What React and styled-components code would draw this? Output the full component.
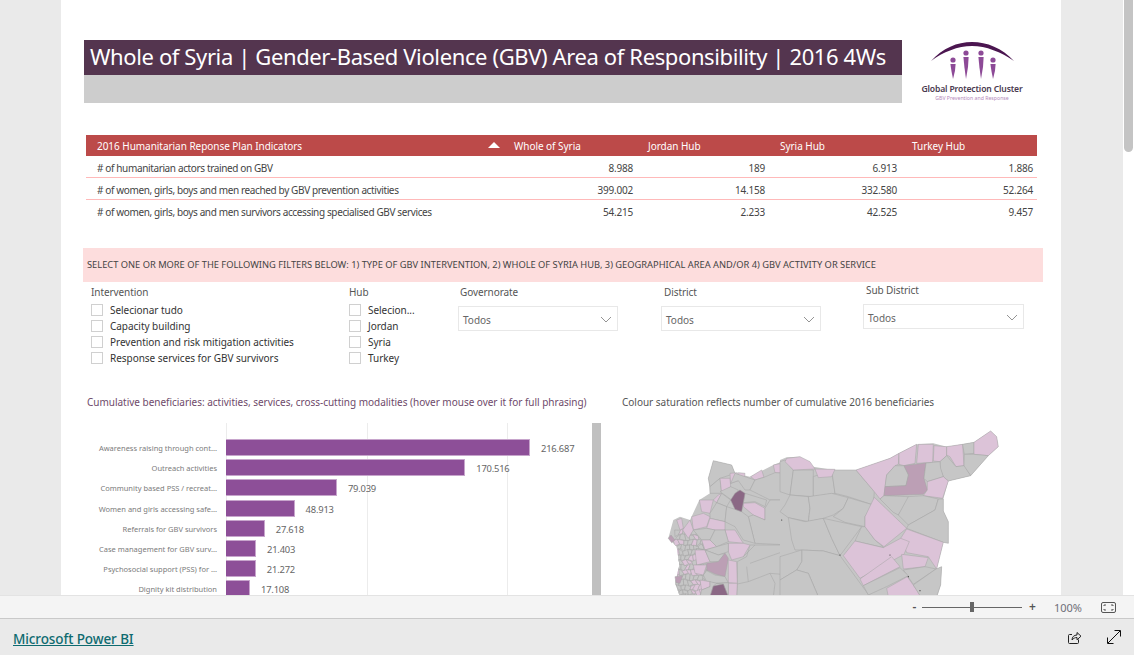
import React from 'react'
import styled, { createGlobalStyle } from 'styled-components'

const FONT = '"Noto Sans", "Open Sans", sans-serif'

const GlobalStyle = createGlobalStyle`
  html, body {
    margin: 0;
    height: 100%;
    overflow: hidden;
    background: #eaeaea;
    font-family: ${FONT};
  }
`

const Shell = styled.div`
  display: flex;
  flex-direction: column;
  height: 655px;
`
const Main = styled.div`
  flex: 1;
  min-height: 0;
  display: flex;
  overflow: hidden;
`
const Gutter = styled.div`
  width: 61px;
  flex: none;
`
const Page = styled.div`
  width: 1000px;
  flex: none;
  background: #fff;
  padding-top: 40px;
  overflow: hidden;
`
const RightGutter = styled.div`
  flex: 1;
`
const ScrollTrack = styled.div`
  width: 11px;
  flex: none;
  background: #fff;
`
const ScrollThumb = styled.div`
  width: 9px;
  height: 152px;
  margin-left: 1px;
  background: #c4c4c4;
  border-radius: 0 0 5px 5px;
`

/* header */
const Header = styled.div`
  display: flex;
  height: 63px;
  margin-left: 23px;
`
const TitleBlock = styled.div`
  width: 818px;
  background: #cdcdcd;
`
const Title = styled.h1`
  margin: 0;
  height: 35px;
  padding-left: 6px;
  background: #54354f;
  color: #fff;
  font-size: 22px;
  font-weight: 400;
  line-height: 32px;
  letter-spacing: -0.38px;
  white-space: nowrap;
`
const Logo = styled.div`
  width: 100px;
  margin-left: 20px;
  display: flex;
  flex-direction: column;
  align-items: center;
`
const LogoName = styled.div`
  font-size: 8.6px;
  font-weight: 600;
  color: #4a3a50;
  line-height: 11px;
  margin-top: 2px;
  white-space: nowrap;
  letter-spacing: -0.15px;
`
const LogoSub = styled.div`
  font-size: 5.2px;
  color: #b58abb;
  line-height: 7px;
  white-space: nowrap;
`

/* table */
const Table = styled.div`
  width: 951px;
  margin: 32px 0 0 25px;
`
const TableRow = styled.div`
  display: grid;
  grid-template-columns: 423px repeat(4, 132px);
  height: ${p => (p.$head ? '21px' : '22px')};
  padding-top: ${p => (p.$head ? '0' : '1px')};
  align-items: center;
  background: ${p => (p.$head ? '#bc4a49' : '#fff')};
  color: ${p => (p.$head ? '#fff' : '#444')};
  box-shadow: ${p => (p.$line ? 'inset 0 -1px 0 #ffb9b9' : 'none')};
  box-sizing: border-box;
  font-size: 10px;
  letter-spacing: ${p => (p.$head ? '-0.04px' : '-0.37px')};
`
const RowLabel = styled.div`
  padding-left: 11px;
  position: relative;
  white-space: nowrap;
`
const SortArrow = styled.span`
  position: absolute;
  right: 9px;
  top: 3px;
  width: 0;
  height: 0;
  border-left: 6px solid transparent;
  border-right: 6px solid transparent;
  border-bottom: 6px solid #fff;
`
const HeadCell = styled.div`
  padding-left: 7px;
  white-space: nowrap;
  &:nth-child(2) {
    padding-left: 5px;
  }
`
const ValueCell = styled.div`
  text-align: right;
  padding-right: 8px;
  letter-spacing: -0.2px;
  &:last-child {
    padding-right: 4px;
  }
`

/* filters */
const Banner = styled.div`
  width: 960px;
  height: 34px;
  margin: 26px 0 0 22px;
  padding-left: 4px;
  box-sizing: border-box;
  background: #fddddd;
  color: #444;
  font-size: 9.3px;
  line-height: 34px;
  white-space: nowrap;
`
const Filters = styled.div`
  display: flex;
  height: 108px;
  margin: 3px 0 0 30px;
`
const SlicerColumn = styled.div`
  width: ${p => p.$width}px;
  flex: none;
`
const DropColumn = styled.div`
  width: ${p => p.$width || 160}px;
  flex: none;
  margin-right: ${p => p.$gap || 0}px;
  margin-top: ${p => (p.$raised ? '-2px' : '0')};
`
const SlicerLabel = styled.div`
  font-size: 10px;
  line-height: 14px;
  color: #555;
  white-space: nowrap;
  letter-spacing: -0.08px;
  padding-left: ${p => p.$indent || 0}px;
`
const CheckList = styled.div`
  margin-top: 3px;
`
const CheckRow = styled.div`
  display: flex;
  align-items: center;
  height: 16px;
  font-size: 10px;
  color: #333;
  white-space: nowrap;
  letter-spacing: -0.03px;
`
const CheckBox = styled.span`
  width: 10px;
  height: 10px;
  margin-right: 7px;
  border: 1px solid #d0d0d0;
  flex: none;
`
const Dropdown = styled.div`
  display: flex;
  align-items: center;
  justify-content: space-between;
  height: 25px;
  margin-top: 7px;
  padding: 2px 5px 0 4px;
  box-sizing: border-box;
  border: 1px solid #e8e8e8;
  font-size: 10px;
  color: #666;
`

/* charts */
const ChartTitles = styled.div`
  display: flex;
  margin-left: 26px;
  height: 18px;
  margin-bottom: 12px;
`
const ChartTitle = styled.div`
  font-size: 10px;
  line-height: 18px;
  color: ${p => (p.$muted ? '#555' : '#6e4a6a')};
  width: ${p => p.$width || 'auto'};
  white-space: nowrap;
  letter-spacing: -0.02px;
`
const ChartRow = styled.div`
  display: flex;
  margin-left: 26px;
`
const BarChart = styled.div`
  width: 505px;
  flex: none;
  display: grid;
  grid-template-columns: 130px 1fr;
  column-gap: 9px;
  padding-top: 16px;
  height: 300px;
  box-sizing: border-box;
  background:
    linear-gradient(#ececec, #ececec) 139px 0 / 1px 100% no-repeat,
    linear-gradient(#ececec, #ececec) 280px 0 / 1px 100% no-repeat,
    linear-gradient(#ececec, #ececec) 420px 0 / 1px 100% no-repeat;
  align-content: start;
`
const BarLabel = styled.div`
  height: 20.2px;
  font-size: 7.5px;
  line-height: 18px;
  text-align: right;
  color: #7b7b7b;
  white-space: nowrap;
`
const BarCell = styled.div`
  height: 20.2px;
  display: flex;
  align-items: flex-start;
`
const Bar = styled.div`
  height: 17px;
  box-sizing: border-box;
  background: #8d4f98;
  border: 1px solid #c7a5cc;
  border-left: none;
  flex: none;
`
const BarValue = styled.span`
  margin-left: 11px;
  font-size: 9.4px;
  line-height: 19px;
  color: #666;
  letter-spacing: -0.2px;
`
const ChartScroll = styled.div`
  width: 9px;
  height: 172px;
  flex: none;
  background: #c0c0c0;
`
const MapWrap = styled.div`
  margin-left: 39px;
  flex: none;
`

/* bottom bars */
const ZoomBar = styled.div`
  height: 24px;
  flex: none;
  box-sizing: border-box;
  background: #f4f4f4;
  border-top: 1px solid #e3e3e3;
  border-bottom: 1px solid #c9c9c9;
  display: flex;
  align-items: center;
  justify-content: flex-end;
  padding-right: 18px;
  color: #555;
`
const ZoomSign = styled.span`
  font-size: 12px;
  line-height: 12px;
  font-weight: 600;
  color: #555;
  width: 9px;
  text-align: center;
`
const Slider = styled.div`
  width: 100px;
  height: 1px;
  margin: 0 6px 0 3px;
  background: #666;
  display: flex;
  align-items: center;
  justify-content: center;
`
const SliderThumb = styled.span`
  width: 4px;
  height: 10px;
  flex: none;
  background: #666;
`
const ZoomValue = styled.span`
  margin: 0 19px 0 17px;
  font-size: 11px;
  color: #6f6f78;
`
const Footer = styled.div`
  height: 36px;
  flex: none;
  display: flex;
  align-items: center;
  padding: 0 13px;
  background: #eaeaea;
`
const BrandLink = styled.a`
  flex: 1;
  padding-top: 3px;
  font-size: 13.5px;
  font-weight: 500;
  color: #0e6b70;
  text-decoration: underline;
  letter-spacing: -0.1px;
`
const FooterIcons = styled.div`
  display: flex;
  gap: 25px;
`

const indicators = [
  ['# of humanitarian actors trained on GBV', '8.988', '189', '6.913', '1.886'],
  ['# of women, girls, boys and men reached by GBV prevention activities', '399.002', '14.158', '332.580', '52.264'],
  ['# of women, girls, boys and men survivors accessing specialised GBV services', '54.215', '2.233', '42.525', '9.457'],
]

const bars = [
  ['Awareness raising through cont...', 216687],
  ['Outreach activities', 170516],
  ['Community based PSS / recreat...', 79039],
  ['Women and girls accessing safe...', 48913],
  ['Referrals for GBV survivors', 27618],
  ['Case management for GBV surv...', 21403],
  ['Psychosocial support (PSS) for ...', 21272],
  ['Dignity kit distribution', 17108],
]

const fmt = n => String(n).replace(/(\d)(\d{3})$/, '$1.$2')

const Chevron = () => (
  <svg width="12" height="7" viewBox="0 0 12 7" fill="none" stroke="#888" strokeWidth="0.9">
    <path d="M1 1l5 5 5-5" />
  </svg>
)

const LogoMark = () => (
  <svg width="90" height="42" viewBox="0 0 90 42">
    <path d="M4 21C16 8 30 2 45 2c15 0 30 6 42 19-13-9-28-15-42-15C31 6 16 12 4 21z" fill="#4b1650" />
    {[[26, 20], [39, 13], [54, 13], [66, 20]].map(([x, y]) => (
      <g key={x} fill="#8d4a97">
        <circle cx={x} cy={y} r="2.6" />
        <path d={`M${x - 2.6} ${y + 4}h5.200l-.6 ${(39 - y - 4) * 0.45}-2 ${(39 - y - 4) * 0.55}-1.600-${(39 - y - 4) * 0.55}z`} />
      </g>
    ))}
  </svg>
)

const GREY = '#c6c6c6'
const PINK = '#dcc3d8'
const MID = '#bc9fb5'
const DARK = '#8b6885'

// coordinates are read from the 3x crops, hence the two scaled groups below
const eastOutline = '0,105 20,97 60,95 100,125 175,137 228,135 330,100 357,85 410,58 460,55 500,65 582,52 632,18 650,35 655,65 625,92 572,152 505,168 490,222 490,258 505,290 505,355 490,352 470,432 485,425 482,480 470,520 0,520'
const westOutline = '160,32 215,45 225,70 270,80 300,65 340,45 390,25 390,440 60,440 45,400 58,345 50,290 25,265 40,210 60,200 90,210 118,150 150,130 145,85'

const eastRegions = [
  [GREY, '0,110 15,105 40,135 30,210 0,200'],
  [GREY, '40,135 100,135 100,215 30,210'],
  [GREY, '100,155 155,135 165,205 100,215'],
  [GREY, '155,135 228,135 283,200 280,240 205,215 165,205'],
  [GREY, '15,240 30,210 85,215 90,250 85,290 25,278 0,260'],
  [GREY, '85,215 155,205 205,218 190,250 160,270 130,280 85,290 90,250'],
  [GREY, '205,218 280,240 255,275 255,305 195,292 160,275 190,250'],
  [GREY, '25,278 75,290 130,280 155,340 180,392 130,378 65,375 45,375 35,345'],
  [GREY, '130,280 245,305 180,392 155,340'],
  [GREY, '255,305 285,345 312,368 225,348 245,305'],
  [GREY, '65,375 130,378 180,392 270,515 115,515 85,445 50,435 65,410'],
  [GREY, '0,395 65,375 65,410 50,435 0,465'],
  [GREY, '50,435 85,445 115,515 0,515 0,465'],
  [PINK, '228,135 330,100 357,85 355,118 345,122 320,150 312,212 300,222 283,200'],
  [PINK, '357,85 410,58 405,115 372,122 357,118'],
  [PINK, '415,58 460,58 458,112 410,115'],
  [PINK, '462,62 500,65 500,92 480,110 460,108'],
  [PINK, '500,65 548,58 552,122 528,125 510,95 500,90'],
  [GREY, '548,58 582,52 582,85 553,88'],
  [PINK, '582,52 632,18 650,35 655,65 625,92 582,88'],
  [GREY, '553,88 582,88 625,92 572,152 552,125'],
  [GREY, '500,92 528,125 552,122 572,152 505,168 490,155 480,130 480,110'],
  [GREY, '345,122 372,122 385,150 378,182 315,185 320,150'],
  [MID, '372,122 438,114 432,160 442,195 430,208 312,212 315,185 378,182 386,150'],
  [GREY, '438,114 480,110 482,130 490,155 442,170 432,160'],
  [PINK, '442,170 490,155 505,168 488,220 430,212 442,195'],
  [GREY, '300,222 312,212 385,215 385,225 355,270 340,262'],
  [GREY, '385,215 430,212 475,222 465,255 385,300 355,270'],
  [GREY, '475,222 490,222 490,258 505,290 505,355 490,352 380,310 385,300 465,255'],
  [PINK, '283,217 380,310 312,365 285,345 255,305 255,275'],
  [PINK, '380,312 490,352 470,432 445,395 380,383 362,340'],
  [PINK, '225,348 310,368 362,340 388,350 372,388 240,460 190,392'],
  [PINK, '240,462 335,395 360,425 250,482'],
  [PINK, '365,388 445,398 435,425 370,432'],
  [GREY, '370,435 435,425 468,432 400,478'],
  [GREY, '250,482 360,428 385,452 320,485 265,510'],
  [PINK, '320,490 382,455 410,495 422,515 325,515'],
  [GREY, '468,432 485,425 482,480 470,515 422,515 400,480'],
  [PINK, '20,100 60,95 90,110 105,132 40,135 15,110'],
  [PINK, '105,132 165,133 155,155 115,158'],
]

const westRegions = [
  [GREY, '160,32 215,45 225,70 180,85 150,110 145,85'],
  [GREY, '150,110 180,85 185,130 150,130'],
  [PINK, '180,85 210,85 212,110 185,130'],
  [PINK, '210,70 232,68 235,92 212,100'],
  [PINK, '235,68 255,70 252,95 235,92'],
  [PINK, '272,80 305,60 312,82 285,90'],
  [PINK, '340,45 365,40 368,70 345,68'],
  [GREY, '225,70 270,85 285,90 270,120 255,120 235,92 212,100'],
  [GREY, '285,90 312,82 345,68 390,70 390,150 330,150 290,130 270,120'],
  [GREY, '212,110 235,120 215,150 180,125'],
  [PINK, '175,135 185,130 170,158 160,150'],
  [PINK, '118,150 160,150 150,190 125,185'],
  [GREY, '185,130 212,150 200,170 170,158'],
  [GREY, '150,190 170,158 200,170 195,215 150,205'],
  [GREY, '255,130 320,150 315,170 285,155 250,158'],
  [PINK, '250,160 285,158 315,175 315,210 280,195 250,170'],
  [GREY, '390,150 330,150 315,175 315,210 280,195 265,200 285,280 390,285'],
  [GREY, '200,170 225,178 245,185 265,200 285,280 250,270 225,230 195,215'],
  [PINK, '95,200 130,190 150,200 140,230 100,240'],
  [PINK, '150,205 195,215 195,240 165,240 140,235'],
  [PINK, '195,240 225,240 250,280 205,275'],
  [GREY, '100,240 140,235 165,240 150,270 125,270'],
  [PINK, '125,270 150,270 170,290 135,300'],
  [GREY, '165,240 195,240 205,275 170,290 150,270'],
  [GREY, '232,335 260,320 270,285 390,285 390,440 230,440 232,400'],
  [PINK, '205,280 250,280 270,285 250,320 215,330 205,305'],
  [GREY, '170,290 205,280 205,305 175,315 135,300'],
  [PINK, '105,300 135,300 150,335 110,345'],
  [GREY, '135,300 175,315 195,310 175,335 150,335'],
  [MID, '140,340 175,335 195,310 205,325 195,380 165,372 140,360'],
  [PINK, '205,330 230,335 232,400 205,398 205,370'],
  [PINK, '100,345 140,345 130,375 105,370'],
  [GREY, '130,375 140,362 165,375 195,380 205,398 170,400 140,395'],
  [PINK, '120,390 150,395 150,410 125,420'],
  [GREY, '150,395 170,400 160,408 150,440 120,440 125,420 150,410'],
  [PINK, '205,400 232,400 230,440 205,440'],
  [GREY, '170,400 205,398 205,440 190,402'],
  [PINK, '50,210 65,205 70,235 60,240'],
  [PINK, '68,240 90,210 100,240 85,265'],
  [MID, '25,265 33,255 45,270 35,278'],
  [MID, '45,380 68,378 60,400 48,398'],
  [DARK, '240,120 255,130 245,185 225,178 212,150 225,130'],
  [DARK, '160,408 190,402 205,440 150,440'],
]

// interior lines of the big grey western districts
const westLines = [
  '270,340 340,315 390,298',
  '250,320 285,285',
  '260,350 265,395 232,402',
  '265,395 330,370 345,400 340,440',
  '330,370 390,375',
]

// the tiny districts along the coast, too many to draw by hand
const noise = (a, b) => ((Math.sin(a * 12.9898 + b * 78.233) * 43758.5453) % 1)
const coastCells = []
for (let c = 0; c < 7; c++) {
  for (let r = 0; r < 14; r++) {
    const x = 44 + c * 13 + (r % 2) * 6
    const y = 240 + r * 15
    const p = (i, j) => `${x + i * 13 + noise(c + i, r + j) * 5},${y + j * 15 + noise(r + j, c + i) * 5}`
    coastCells.push({
      key: `${c}-${r}`,
      pts: [p(0, 0), p(1, 0), p(1, 1), p(0, 1)].join(' '),
      fill: Math.abs(noise(c, r)) > 0.65 ? PINK : GREY,
    })
  }
}

const specks = [[180, 390], [330, 390], [385, 455], [420, 497], [5, 285]]

const Regions = ({ list }) =>
  list.map(([fill, pts]) => <polygon key={pts} points={pts} fill={fill} />)

const SyriaMap = () => (
  <svg width="380" height="172" viewBox="640 423 380 172">
    <defs>
      <clipPath id="west">
        <polygon points={westOutline} />
      </clipPath>
    </defs>
    <g transform="translate(660 450) scale(0.3333)" stroke="#a4a4a4" strokeWidth="1.5" strokeLinejoin="round">
      <polygon points={westOutline} fill={GREY} stroke="none" />
      <g clipPath="url(#west)">
        {coastCells.map(cell => (
          <polygon key={cell.key} points={cell.pts} fill={cell.fill} />
        ))}
      </g>
      <Regions list={westRegions} />
      {westLines.map(pts => (
        <polyline key={pts} points={pts} fill="none" />
      ))}
    </g>
    <g transform="translate(780 425) scale(0.3333)" stroke="#a4a4a4" strokeWidth="1.5" strokeLinejoin="round">
      <polygon points={eastOutline} fill={GREY} stroke="none" />
      <Regions list={eastRegions} />
      {specks.map(([x, y]) => (
        <circle key={x} cx={x} cy={y} r="1.8" fill="#333" stroke="none" />
      ))}
    </g>
  </svg>
)

export default function App() {
  const max = bars[0][1]
  return (
    <Shell>
      <GlobalStyle />
      <Main>
        <Gutter />
        <Page>
          <Header>
            <TitleBlock>
              <Title>Whole of Syria | Gender-Based Violence (GBV) Area of Responsibility | 2016 4Ws</Title>
            </TitleBlock>
            <Logo>
              <LogoMark />
              <LogoName>Global Protection Cluster</LogoName>
              <LogoSub>GBV Prevention and Response</LogoSub>
            </Logo>
          </Header>

          <Table>
            <TableRow $head>
              <RowLabel>
                2016 Humanitarian Reponse Plan Indicators
                <SortArrow />
              </RowLabel>
              <HeadCell>Whole of Syria</HeadCell>
              <HeadCell>Jordan Hub</HeadCell>
              <HeadCell>Syria Hub</HeadCell>
              <HeadCell>Turkey Hub</HeadCell>
            </TableRow>
            {indicators.map(([label, ...values], i) => (
              <TableRow key={label} $line={i < 2}>
                <RowLabel>{label}</RowLabel>
                {values.map((v, j) => (
                  <ValueCell key={j}>{v}</ValueCell>
                ))}
              </TableRow>
            ))}
          </Table>

          <Banner>
            SELECT ONE OR MORE OF THE FOLLOWING FILTERS BELOW: 1) TYPE OF GBV INTERVENTION, 2) WHOLE OF SYRIA HUB, 3) GEOGRAPHICAL AREA AND/OR 4) GBV ACTIVITY OR SERVICE
          </Banner>

          <Filters>
            <SlicerColumn $width={258}>
              <SlicerLabel>Intervention</SlicerLabel>
              <CheckList>
                {['Selecionar tudo', 'Capacity building', 'Prevention and risk mitigation activities', 'Response services for GBV survivors'].map(t => (
                  <CheckRow key={t}><CheckBox />{t}</CheckRow>
                ))}
              </CheckList>
            </SlicerColumn>
            <SlicerColumn $width={109}>
              <SlicerLabel>Hub</SlicerLabel>
              <CheckList>
                {['Selecion...', 'Jordan', 'Syria', 'Turkey'].map(t => (
                  <CheckRow key={t}><CheckBox />{t}</CheckRow>
                ))}
              </CheckList>
            </SlicerColumn>
            <DropColumn $gap={43}>
              <SlicerLabel $indent={2}>Governorate</SlicerLabel>
              <Dropdown>Todos<Chevron /></Dropdown>
            </DropColumn>
            <DropColumn $gap={42}>
              <SlicerLabel $indent={3}>District</SlicerLabel>
              <Dropdown>Todos<Chevron /></Dropdown>
            </DropColumn>
            <DropColumn $raised $width={161}>
              <SlicerLabel $indent={3}>Sub District</SlicerLabel>
              <Dropdown>Todos<Chevron /></Dropdown>
            </DropColumn>
          </Filters>

          <ChartTitles>
            <ChartTitle $width="535px">Cumulative beneficiaries: activities, services, cross-cutting modalities (hover mouse over it for full phrasing)</ChartTitle>
            <ChartTitle $muted>Colour saturation reflects number of cumulative 2016 beneficiaries</ChartTitle>
          </ChartTitles>

          <ChartRow>
            <BarChart>
              {bars.map(([label, value]) => (
                <React.Fragment key={label}>
                  <BarLabel>{label}</BarLabel>
                  <BarCell>
                    <Bar style={{ width: `${(value / max) * 304}px` }} />
                    <BarValue>{fmt(value)}</BarValue>
                  </BarCell>
                </React.Fragment>
              ))}
            </BarChart>
            <ChartScroll />
            <MapWrap>
              <SyriaMap />
            </MapWrap>
          </ChartRow>
        </Page>
        <RightGutter />
        <ScrollTrack>
          <ScrollThumb />
        </ScrollTrack>
      </Main>

      <ZoomBar>
        <ZoomSign>-</ZoomSign>
        <Slider><SliderThumb /></Slider>
        <ZoomSign>+</ZoomSign>
        <ZoomValue>100%</ZoomValue>
        <svg width="15" height="11" viewBox="0 0 15 11" fill="none" stroke="#555">
          <rect x="0.5" y="0.5" width="14" height="10" rx="1.5" />
          <path d="M3 4V3h2M12 4V3h-2M3 7v1h2M12 7v1h-2" />
        </svg>
      </ZoomBar>

      <Footer>
        <BrandLink>Microsoft Power BI</BrandLink>
        <FooterIcons>
          <svg width="15" height="15" viewBox="0 0 15 15" fill="none" stroke="#222">
            <path d="M11.5 9.5v3a1 1 0 0 1-1 1h-8a1 1 0 0 1-1-1v-7a1 1 0 0 1 1-1h2.5" />
            <path d="M5 10c0-3 2-5 5-5V2.500l4 3.700-4 3.600V7.500c-2 0-3.500 .8-5 2.500z" />
          </svg>
          <svg width="14" height="14" viewBox="0 0 14 14" fill="none" stroke="#111">
            <path d="M1 13L13 1M7.500 .5h6v6M.5 7.500v6h6" />
          </svg>
        </FooterIcons>
      </Footer>
    </Shell>
  )
}
